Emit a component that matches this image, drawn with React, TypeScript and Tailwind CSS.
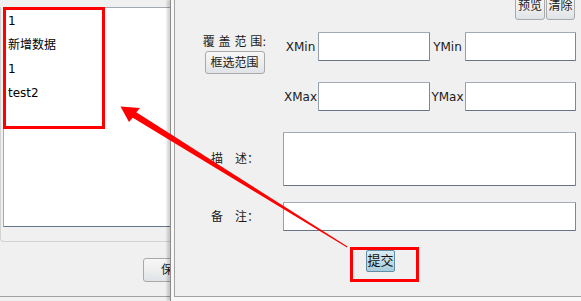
import React from 'react';

const ITEMS = ['1', '新增数据', '1', 'test2'];

const inputCls =
  'bg-white border border-t-[#a2abb4] border-l-[#96a0aa] border-r-[#7d8893] border-b-[#667585] rounded-[1px]';

function WinButton({ children, className = '' }: { children: React.ReactNode; className?: string }) {
  return (
    <div
      className={`flex shrink-0 items-center justify-center rounded-[3px] border border-[#a9a9a9] bg-gradient-to-b from-[#f7f7f7] via-[#eeeeee] to-[#dfe3e8] text-[12px] leading-[14px] text-[#1a1a1a] ${className}`}
    >
      {children}
    </div>
  );
}

export default function App() {
  return (
    <div className="relative flex h-[301px] w-[581px] overflow-hidden bg-[#f0f0f0] font-['DejaVu_Sans','Noto_Sans_CJK_SC',sans-serif] text-[12px] text-[#1b1b1b]">
      {/* left window: list */}
      <div className="flex h-[297px] w-[170px] shrink-0 flex-col overflow-hidden border-b border-[#a0a0a0]">
        <div className="mt-[7px] rounded-bl-[4px] border-b border-l border-[#d2d2d2] pb-[14px]">
          <div className="ml-[2px] h-[220px] w-[180px] border border-[#a3a9b0] border-b-[#62768a] bg-white pl-[4px] pt-[1px] text-black">
            {ITEMS.map((t, i) => (
              <div key={i} className="h-[24px] leading-[24px]">
                {t}
              </div>
            ))}
          </div>
        </div>
        <WinButton className="ml-[143px] mt-[16px] h-[24px] w-[60px]">保存</WinButton>
      </div>

      {/* dialog */}
      <div className="h-full flex-1 border-l border-[#8c8c8c] bg-[#f8f8f8] pb-[4px] pl-[3px] shadow-[-3px_0_2px_rgba(0,0,0,0.16)]">
        <div className="flex h-full flex-col border-b border-l border-[#a3a3a3] bg-[#f0f0f0]">
          {/* top buttons */}
          <div className="-mt-[3px] flex justify-end gap-[1px] pr-[6px]">
            <WinButton className="h-[23px] w-[30px] !items-start pt-[1px]">预览</WinButton>
            <WinButton className="h-[23px] w-[29px] !items-start pt-[1px]">清除</WinButton>
          </div>

          {/* range rows */}
          <div className="mt-[12px] flex">
            <div className="ml-[27px] flex w-[65px] flex-col items-center pt-[3px]">
              <div className="leading-[14px]">覆 盖 范 围:</div>
              <WinButton className="mt-[2px] h-[23px] w-[60px]">框选范围</WinButton>
            </div>
            <div className="grid grid-cols-[51px_112px_35px_111px] grid-rows-[29px_29px] gap-y-[21px]">
              <div className="flex items-center justify-center pl-[16px]">XMin</div>
              <div className={inputCls} />
              <div className="flex items-center justify-center">YMin</div>
              <div className={inputCls} />
              <div className="flex items-center justify-center pl-[16px]">XMax</div>
              <div className={inputCls} />
              <div className="flex items-center justify-center">YMax</div>
              <div className={inputCls} />
            </div>
          </div>

          {/* description */}
          <div className="mt-[21px] flex items-center">
            <div className="ml-[36px] w-[72px] leading-[14px]">描　述：</div>
            <div className={`h-[54px] w-[293px] ${inputCls}`} />
          </div>

          {/* remark */}
          <div className="mt-[16px] flex items-center">
            <div className="ml-[36px] w-[72px] leading-[14px]">备　注：</div>
            <div className={`h-[29px] w-[293px] ${inputCls}`} />
          </div>

          {/* submit */}
          <div className="ml-[191px] mt-[19px] flex h-[22px] w-[29px] items-center justify-center rounded-[2px] border border-[#5f8ea6] bg-gradient-to-b from-[#d9ecf4] to-[#a9cddb] text-[13px] text-[#111]">
            提交
          </div>
        </div>
      </div>

      {/* annotations */}
      <div className="absolute left-[3px] top-[7px] h-[122px] w-[102px] border-[3px] border-[#ff0000]" />
      <div className="absolute left-[350px] top-[247px] h-[35px] w-[69px] border-[3px] border-[#ff0000]" />
      <svg className="absolute left-0 top-0" width="581" height="301" viewBox="0 0 581 301">
        <polygon
          fill="#ff0000"
          points="120.5,106.5 140,108 136.3,112.3 347.5,246.6 347,247.6 132.8,117.7 129,122"
        />
      </svg>
    </div>
  );
}
